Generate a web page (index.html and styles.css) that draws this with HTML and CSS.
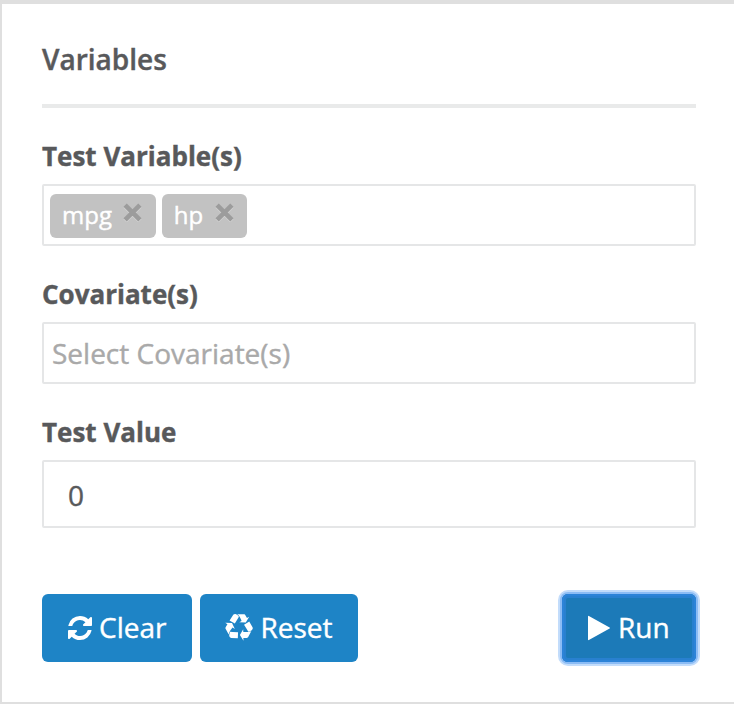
FILE: index.html
```html
<!DOCTYPE html>
<html lang="en">
<head>
<meta charset="utf-8">
<title>Variables</title>
<link rel="stylesheet" href="styles.css">
</head>
<body>
<form class="panel">
  <h2 class="title">Variables</h2>
  <div class="group">
    <label class="label">Test Variable(s)</label>
    <div class="select tags">
      <span class="tag">mpg<svg class="remove" viewBox="0 0 18 18"><path class="shine" d="M2 3l14 14m0-14l-14 14"/><path d="M2 2l14 14m0-14l-14 14"/></svg></span>
      <span class="tag">hp<svg class="remove" viewBox="0 0 18 18"><path class="shine" d="M2 3l14 14m0-14l-14 14"/><path d="M2 2l14 14m0-14l-14 14"/></svg></span>
    </div>
  </div>
  <div class="group">
    <label class="label">Covariate(s)</label>
    <div class="select placeholder">Select Covariate(s)</div>
  </div>
  <div class="group">
    <label class="label">Test Value</label>
    <div class="input">0</div>
  </div>
  <div class="actions">
    <button type="button" class="btn"><svg class="icon" viewBox="128 0 1536 1792"><path d="M1639 1056q0 5-1 7-64 268-268 434.500t-478 166.500q-146 0-282.500-55t-243.500-157l-129 129q-19 19-45 19t-45-19-19-45v-448q0-26 19-45t45-19h448q26 0 45 19t19 45-19 45l-137 137q71 66 161 102t187 36q134 0 250-65t186-179q11-17 53-117 8-23 30-23h192q13 0 22.500 9.500t9.500 22.500zm25-800v448q0 26-19 45t-45 19h-448q-26 0-45-19t-19-45 19-45l138-138q-148-137-349-137-134 0-250 65t-186 179q-11 17-53 117-8 23-30 23h-199q-13 0-22.500-9.500t-9.500-22.500v-7q65-268 270-434.500t480-166.500q146 0 284 55.500t245 156.500l130-129q19-19 45-19t45 19 19 45z"/></svg><span class="caption">Clear</span></button>
    <button type="button" class="btn reset"><svg class="icon wide" viewBox="0 0 1792 1792"><path d="M836 1169l-15 368-2 22-420-29q-36-3-67-31.500t-47-65.500q-11-27-14.500-55t4-65 12-55 21.500-64 19-53q78 12 509 28zm-387-586l180 379-147-92q-63 72-111.500 144.500t-72.500 125-39.500 94.500-18.500 63l-4 21-190-357q-17-26-18-56t6-47l8-18q35-63 114-188l-140-86zm1231 517l-188 359q-12 29-36.500 46.500t-43.500 20.500l-18 4q-71 7-219 12l8 164-230-367 211-362 7 173q170 16 283 5t170-33zm-785-924q-47 63-265 435l-317-187-19-12 225-356q20-31 60-45t80-10q24 2 48.500 12t42 21 41.500 33 36 34.500 36 39.500 32 35zm655 307l212 363q18 37 12.500 76t-27.500 74q-13 20-33 37t-38 28-48.500 22-47 16-51.500 14-46 12q-34-72-265-436l313-195zm-143-226l142-83-220 373-419-20 151-86q-34-89-75-166t-75.500-123.500-64.500-80-47-46.500l-17-13 405 1q31-3 58 10.500t39 28.500l11 15q39 61 112 190z"/></svg><span class="caption">Reset</span></button>
    <button type="button" class="btn run"><svg class="icon play" viewBox="192 0 1408 1792"><path d="M1576 927l-1328 738q-23 13-39.500 3t-16.500-36v-1472q0-26 16.500-36t39.500 3l1328 738q23 13 23 31t-23 31z"/></svg><span class="caption">Run</span></button>
  </div>
</form>
</body>
</html>
```

FILE: styles.css
```css
* {
  box-sizing: border-box;
}

body {
  margin: 0;
  background: #fff;
  color: #58595b;
  font-family: "Open Sans", sans-serif;
  -webkit-text-stroke: 0.4px;
}

.panel {
  height: 704px;
  padding: 31px 38px 0 40px;
  border: solid #dfdfdf;
  border-width: 4px 0 2px 2px;
}

.title {
  height: 73px;
  margin: 0 0 31px;
  border-bottom: 4px solid #e9eaea;
  font-size: 28px;
  font-weight: 600;
  line-height: 48px;
}

.group {
  margin-bottom: 31px;
}

.label {
  display: block;
  height: 45px;
  font-size: 26px;
  font-weight: 700;
  line-height: 34px;
}

.select,
.input {
  display: flex;
  align-items: center;
  border: 2px solid #e5e6e7;
  border-radius: 2px;
  font-size: 28px;
}

.select {
  height: 62px;
  padding: 0 8px;
}

.tags {
  gap: 6px;
  padding: 2px 6px 0;
}

.tag {
  display: flex;
  align-items: center;
  height: 44px;
  padding: 0 12px 3px;
  border-radius: 6px;
  background: #c2c2c2;
  color: #fff;
  font-size: 24px;
}

.remove {
  width: 19px;
  height: 19px;
  margin: -4px 1.3px 0 11.5px;
  fill: none;
  stroke: #9c9c9c;
  stroke-width: 4.4;
}

.shine {
  stroke: #d2d2d2;
}

.placeholder {
  color: #a9a9a9;
}

.input {
  height: 68px;
  padding: 2px 24px 0;
}

.actions {
  display: flex;
  gap: 8px;
  margin-top: 66px;
}

.btn {
  display: flex;
  align-items: center;
  height: 68px;
  padding: 0 26px;
  border: 0;
  border-radius: 6px;
  background: #1e84c6;
  color: #fff;
  font: 28px "Open Sans", sans-serif;
  -webkit-text-stroke: 0.4px;
}

.caption {
  padding-bottom: 2px;
}

.reset {
  width: 158px;
  padding: 0 25px;
}

.run {
  width: 134px;
  margin-left: auto;
  background: #1c7ab8;
  box-shadow: inset 0 0 0 2px #2c83d8, inset 0 0 0 4px #2880cf, 0 0 0 2px #8bbcf5, 0 0 0 4px #c2dcfb;
}

.icon {
  flex: none;
  width: 24px;
  height: 28px;
  margin-right: 7px;
  fill: #fff;
}

.wide {
  width: 28px;
}

.play {
  width: 22px;
  margin-right: 8px;
}
```
